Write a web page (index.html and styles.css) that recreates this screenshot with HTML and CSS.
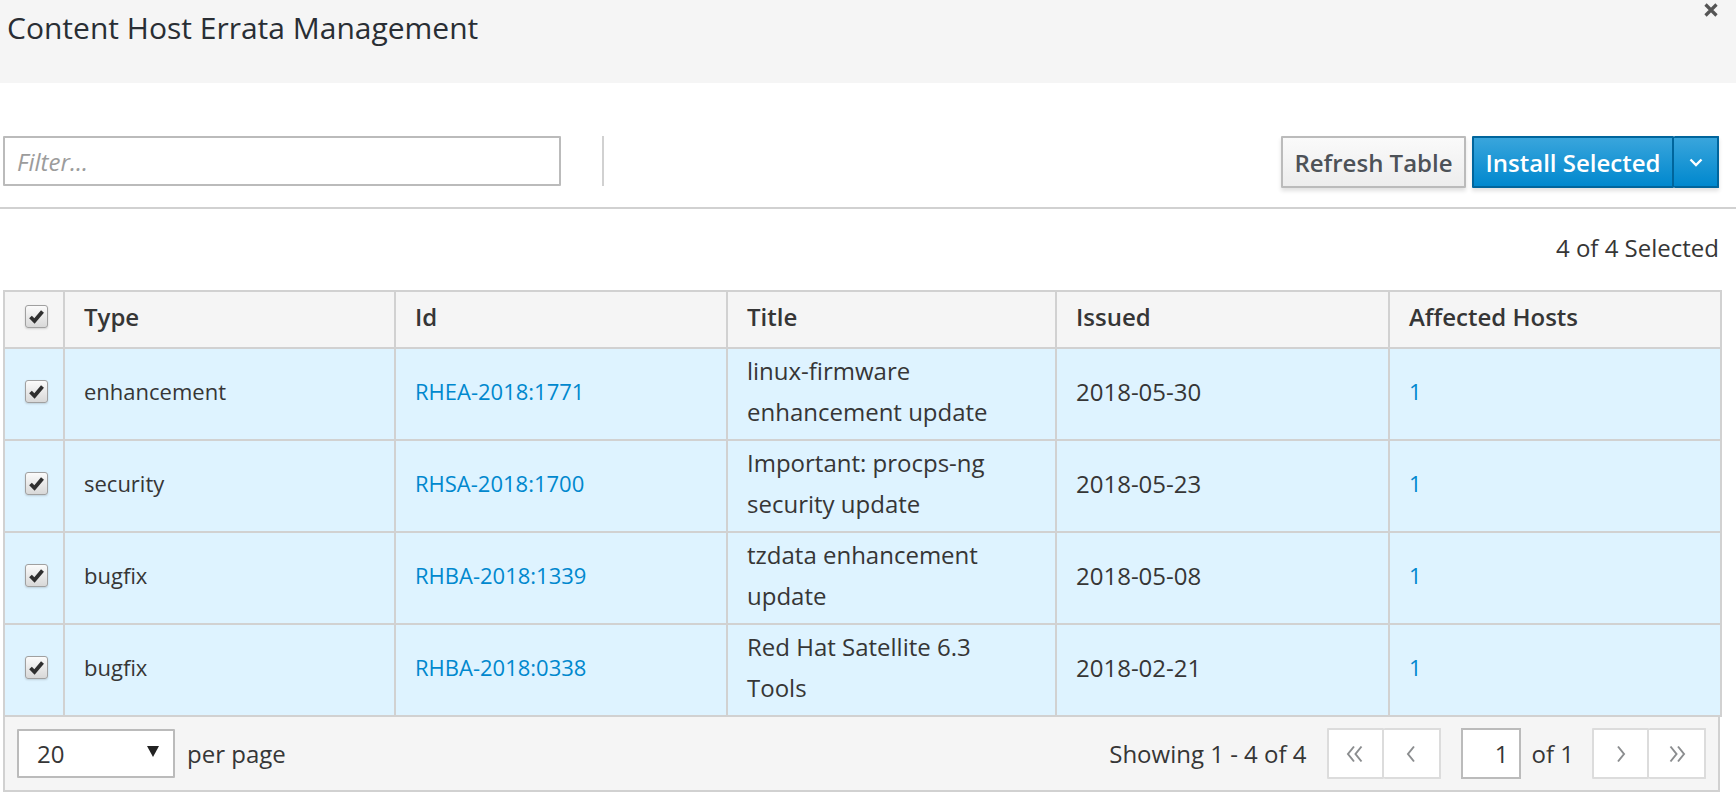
FILE: index.html
```html
<!DOCTYPE html>
<html lang="en">
<head>
<meta charset="utf-8">
<title>Content Host Errata Management</title>
<link rel="stylesheet" href="styles.css">
</head>
<body>
<div class="modal">
  <div class="modal-header">
    <h4 class="modal-title">Content Host Errata Management</h4>
    <button class="close" aria-label="Close">
      <svg width="14" height="14" viewBox="0 0 14 14"><path d="M1.5 1.5L12.5 12.5M12.5 1.5L1.5 12.5" stroke="#555" stroke-width="3.2" fill="none"/></svg>
    </button>
  </div>

  <div class="toolbar">
    <input class="filter" type="text" placeholder="Filter...">
    <span class="toolbar-sep"></span>
    <div class="toolbar-actions">
      <button class="btn btn-default">Refresh Table</button>
      <div class="btn-group">
        <button class="btn btn-primary">Install Selected</button>
        <button class="btn btn-primary btn-caret" aria-label="More">
          <svg width="14" height="9" viewBox="0 0 14 9"><path d="M1.5 1.5L7 7L12.5 1.5" stroke="#fff" stroke-width="2.4" fill="none"/></svg>
        </button>
      </div>
    </div>
  </div>

  <div class="divider"></div>

  <div class="selected-count">4 of 4 Selected</div>

  <div class="table-wrap">
    <table class="errata">
      <colgroup>
        <col class="c-check"><col class="c-type"><col class="c-id"><col class="c-title"><col class="c-issued"><col class="c-hosts">
      </colgroup>
      <thead>
        <tr>
          <th class="cell-check"><span class="cbox"><svg width="23" height="23" viewBox="0 0 23 23"><path d="M5.5 12L9.5 16L17.5 6.5" stroke="#2f2f2f" stroke-width="3.8" fill="none"/></svg></span></th>
          <th>Type</th>
          <th>Id</th>
          <th>Title</th>
          <th>Issued</th>
          <th>Affected Hosts</th>
        </tr>
      </thead>
      <tbody>
        <tr>
          <td class="cell-check"><span class="cbox"><svg width="23" height="23" viewBox="0 0 23 23"><path d="M5.5 12L9.5 16L17.5 6.5" stroke="#2f2f2f" stroke-width="3.8" fill="none"/></svg></span></td>
          <td class="cell-sm">enhancement</td>
          <td class="cell-sm"><a href="#">RHEA-2018:1771</a></td>
          <td>linux-firmware<br>enhancement update</td>
          <td>2018-05-30</td>
          <td class="cell-sm"><a href="#">1</a></td>
        </tr>
        <tr>
          <td class="cell-check"><span class="cbox"><svg width="23" height="23" viewBox="0 0 23 23"><path d="M5.5 12L9.5 16L17.5 6.5" stroke="#2f2f2f" stroke-width="3.8" fill="none"/></svg></span></td>
          <td class="cell-sm">security</td>
          <td class="cell-sm"><a href="#">RHSA-2018:1700</a></td>
          <td>Important: procps-ng<br>security update</td>
          <td>2018-05-23</td>
          <td class="cell-sm"><a href="#">1</a></td>
        </tr>
        <tr>
          <td class="cell-check"><span class="cbox"><svg width="23" height="23" viewBox="0 0 23 23"><path d="M5.5 12L9.5 16L17.5 6.5" stroke="#2f2f2f" stroke-width="3.8" fill="none"/></svg></span></td>
          <td class="cell-sm">bugfix</td>
          <td class="cell-sm"><a href="#">RHBA-2018:1339</a></td>
          <td>tzdata enhancement<br>update</td>
          <td>2018-05-08</td>
          <td class="cell-sm"><a href="#">1</a></td>
        </tr>
        <tr>
          <td class="cell-check"><span class="cbox"><svg width="23" height="23" viewBox="0 0 23 23"><path d="M5.5 12L9.5 16L17.5 6.5" stroke="#2f2f2f" stroke-width="3.8" fill="none"/></svg></span></td>
          <td class="cell-sm">bugfix</td>
          <td class="cell-sm"><a href="#">RHBA-2018:0338</a></td>
          <td>Red Hat Satellite 6.3<br>Tools</td>
          <td>2018-02-21</td>
          <td class="cell-sm"><a href="#">1</a></td>
        </tr>
      </tbody>
    </table>

    <div class="table-footer">
      <div class="per-page">
        <div class="select">
          <span>20</span>
          <svg width="12" height="11" viewBox="0 0 12 11"><polygon points="0,0 12,0 6,11" fill="#222"/></svg>
        </div>
        <span class="per-page-label">per page</span>
      </div>
      <div class="pager">
        <span class="showing">Showing 1 - 4 of 4</span>
        <div class="pager-group">
          <button class="pg-btn" aria-label="First"><svg width="20" height="22" viewBox="0 0 20 22"><path d="M9 3.5L3 11L9 18.5M16.5 3.5L10.5 11L16.5 18.5" stroke="#8b8d8f" stroke-width="2" fill="none"/></svg></button>
          <button class="pg-btn" aria-label="Previous"><svg width="12" height="22" viewBox="0 0 12 22"><path d="M9 3.5L3 11L9 18.5" stroke="#8b8d8f" stroke-width="2" fill="none"/></svg></button>
        </div>
        <input class="page-input" type="text" value="1">
        <span class="of-pages">of 1</span>
        <div class="pager-group">
          <button class="pg-btn" aria-label="Next"><svg width="12" height="22" viewBox="0 0 12 22"><path d="M3 3.5L9 11L3 18.5" stroke="#8b8d8f" stroke-width="2" fill="none"/></svg></button>
          <button class="pg-btn" aria-label="Last"><svg width="20" height="22" viewBox="0 0 20 22"><path d="M3.5 3.5L9.5 11L3.5 18.5M11 3.5L17 11L11 18.5" stroke="#8b8d8f" stroke-width="2" fill="none"/></svg></button>
        </div>
      </div>
    </div>
  </div>
</div>
</body>
</html>
```

FILE: styles.css
```css
* { box-sizing: border-box; }

html, body {
  margin: 0;
  padding: 0;
  background: #fff;
}

body {
  font-family: "Open Sans", "Liberation Sans", sans-serif;
  font-size: 24px;
  color: #363636;
  width: 1736px;
  height: 806px;
  overflow: hidden;
}

.modal {
  display: flex;
  flex-direction: column;
}

.modal-header {
  background: #f5f5f5;
  height: 83px;
  display: flex;
  justify-content: space-between;
  align-items: flex-start;
  padding: 0 18px 0 7px;
}

.modal-title {
  margin: 0;
  padding-top: 9px;
  font-size: 30px;
  font-weight: 400;
  line-height: 38px;
  color: #292e34;
}

.close {
  margin-top: 3px;
  padding: 0;
  border: 0;
  background: none;
  width: 14px;
  height: 14px;
  display: flex;
}

.toolbar {
  display: flex;
  align-items: center;
  margin-top: 53px;
  padding: 0 17px 0 3px;
  height: 52px;
}

.filter {
  width: 558px;
  height: 50px;
  border: 2px solid #bbb;
  border-radius: 1px;
  padding: 0 12px;
  font-family: "Open Sans", "Liberation Sans", sans-serif;
  font-size: 24px;
  color: #363636;
  outline: none;
  align-self: flex-start;
}

.filter::placeholder {
  color: #9c9c9c;
  font-style: italic;
}

.toolbar-sep {
  width: 2px;
  height: 50px;
  background: #d1d1d1;
  margin-left: 41px;
  align-self: flex-start;
}

.toolbar-actions {
  margin-left: auto;
  display: flex;
  gap: 6px;
  height: 52px;
}

.btn {
  font-family: "Open Sans", "Liberation Sans", sans-serif;
  font-size: 24px;
  font-weight: 600;
  height: 52px;
  border-radius: 1px;
  padding: 0 10px;
  cursor: pointer;
  box-shadow: 0 3px 4px rgba(3, 3, 3, 0.12);
}

.btn-default {
  width: 185px;
  color: #4d5258;
  background: linear-gradient(#fafafa, #ededed);
  border: 2px solid #bbb;
}

.btn-group {
  display: flex;
  box-shadow: 0 3px 4px rgba(3, 3, 3, 0.12);
}

.btn-group .btn {
  box-shadow: none;
}

.btn-primary {
  width: 202px;
  color: #fff;
  background: linear-gradient(#39a5dc, #0088ce);
  border: 2px solid #00659c;
}

.btn-group .btn-primary:first-child {
  border-right: 2px solid #00659c;
}

.btn-caret {
  width: 45px;
  padding: 0;
  display: flex;
  align-items: center;
  justify-content: center;
}

.btn-group .btn-caret {
  border-left: 0;
}

.divider {
  height: 2px;
  background: #d1d1d1;
  margin-top: 19px;
}

.selected-count {
  text-align: right;
  padding-right: 17px;
  line-height: 30px;
  margin-top: 24px;
}

.table-wrap {
  margin: 27px 0 0 3px;
  width: 1717px;
}

.errata {
  width: 1717px;
  table-layout: fixed;
  border-collapse: collapse;
  border: 2px solid #d1d1d1;
}

.c-check { width: 60px; }
.c-type { width: 331px; }
.c-id { width: 332px; }
.c-title { width: 329px; }
.c-issued { width: 333px; }
.c-hosts { width: 332px; }

.errata th,
.errata td {
  border: 2px solid #d1d1d1;
  text-align: left;
  vertical-align: middle;
  padding: 0 10px 0 19px;
}

.errata th {
  background: #f5f5f5;
  font-weight: 600;
  height: 57px;
  line-height: 30px;
  color: #363636;
  padding-bottom: 6px;
}

.errata td {
  background: #def3ff;
  height: 92px;
  line-height: 41px;
  padding-top: 0;
  padding-bottom: 6px;
}

.errata td.cell-sm {
  font-size: 22px;
}

.errata .cell-check {
  padding: 0 0 0 20px;
}

.errata th.cell-check {
  padding-bottom: 6px;
}

.errata td.cell-check {
  padding-bottom: 5px;
}

.cbox {
  display: block;
  width: 23px;
  height: 23px;
  border: 1.5px solid #a0a0a0;
  border-radius: 3px;
  background: linear-gradient(#fbfbfb, #d8d8d8);
  box-shadow: 0 1px 2px rgba(0, 0, 0, 0.15);
}

.cbox svg {
  display: block;
  margin: -1.5px 0 0 -1.5px;
}

.errata a {
  color: #0088ce;
  text-decoration: none;
}

.table-footer {
  height: 75px;
  background: #f5f5f5;
  border: 2px solid #d1d1d1;
  border-top: 0;
  display: flex;
  align-items: center;
  justify-content: space-between;
  padding: 0 12px 0 12px;
}

.per-page {
  display: flex;
  align-items: center;
}

.select {
  width: 158px;
  height: 49px;
  background: #fff;
  border: 2px solid #bbb;
  border-radius: 1px;
  display: flex;
  align-items: center;
  justify-content: space-between;
  padding: 0 14px 0 18px;
  color: #363636;
}

.select svg {
  margin-top: -4px;
}

.per-page-label {
  margin-left: 12px;
}

.pager {
  display: flex;
  align-items: center;
}

.showing {
  margin-right: 20px;
}

.pager-group {
  display: flex;
  height: 51px;
}

.pg-btn {
  width: 57px;
  height: 51px;
  background: #fff;
  border: 2px solid #dcdcdc;
  border-radius: 1px;
  display: flex;
  align-items: center;
  justify-content: center;
  padding: 0;
}

.pg-btn + .pg-btn {
  border-left: 0;
}

.page-input {
  width: 60px;
  height: 51px;
  margin-left: 20px;
  border: 2px solid #bbb;
  background: #fff;
  text-align: right;
  padding: 0 10px;
  font-family: "Open Sans", "Liberation Sans", sans-serif;
  font-size: 24px;
  color: #363636;
  outline: none;
}

.of-pages {
  margin: 0 18px 0 11px;
}
```
